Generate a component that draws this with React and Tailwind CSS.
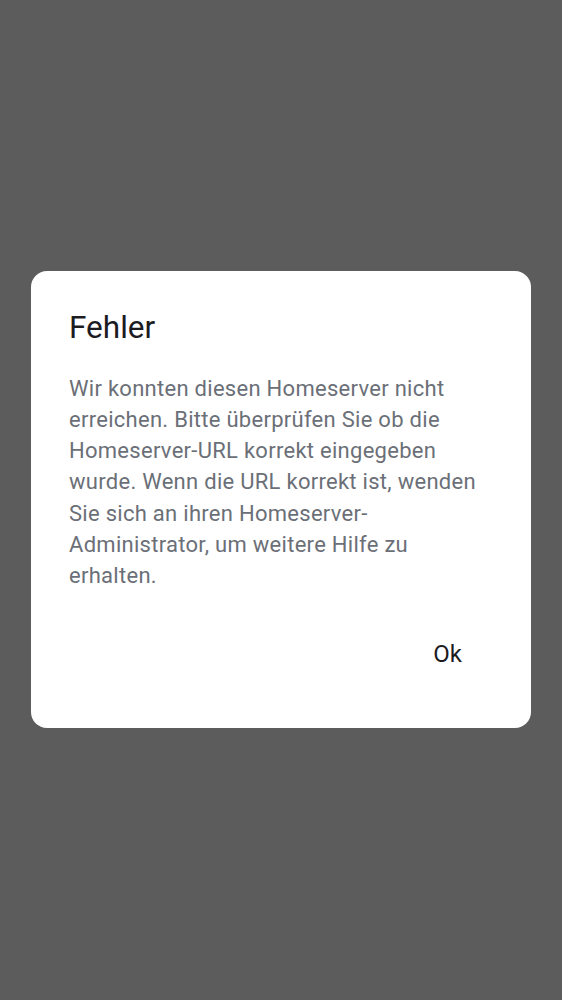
export default function App() {
  return (
    <div className="min-h-[1000px] w-full bg-[#5c5c5c] flex items-start justify-center pt-[271px]" style={{ fontFamily: "Roboto, 'Noto Sans', sans-serif" }}>
      <div className="w-[500px] h-[457px] bg-white rounded-[16px] px-[38px] pt-[39px] flex flex-col">
        <h1 className="text-[31.5px] leading-[36px] text-[#1c1b1f] font-normal">Fehler</h1>
        <p className="mt-[26.5px] text-[22px] leading-[31.3px] text-[#6b6f77] tracking-[0.28px]">
          Wir konnten diesen Homeserver nicht erreichen. Bitte überprüfen Sie ob die Homeserver-URL korrekt eingegeben wurde. Wenn die URL korrekt ist, wenden Sie sich an ihren Homeserver-Administrator, um weitere Hilfe zu erhalten.
        </p>
        <div className="flex justify-end mt-[48.5px] pr-[7px]">
          <button className="text-[24px] leading-[28px] text-[#1c1b1f] px-6">Ok</button>
        </div>
      </div>
    </div>
  );
}
